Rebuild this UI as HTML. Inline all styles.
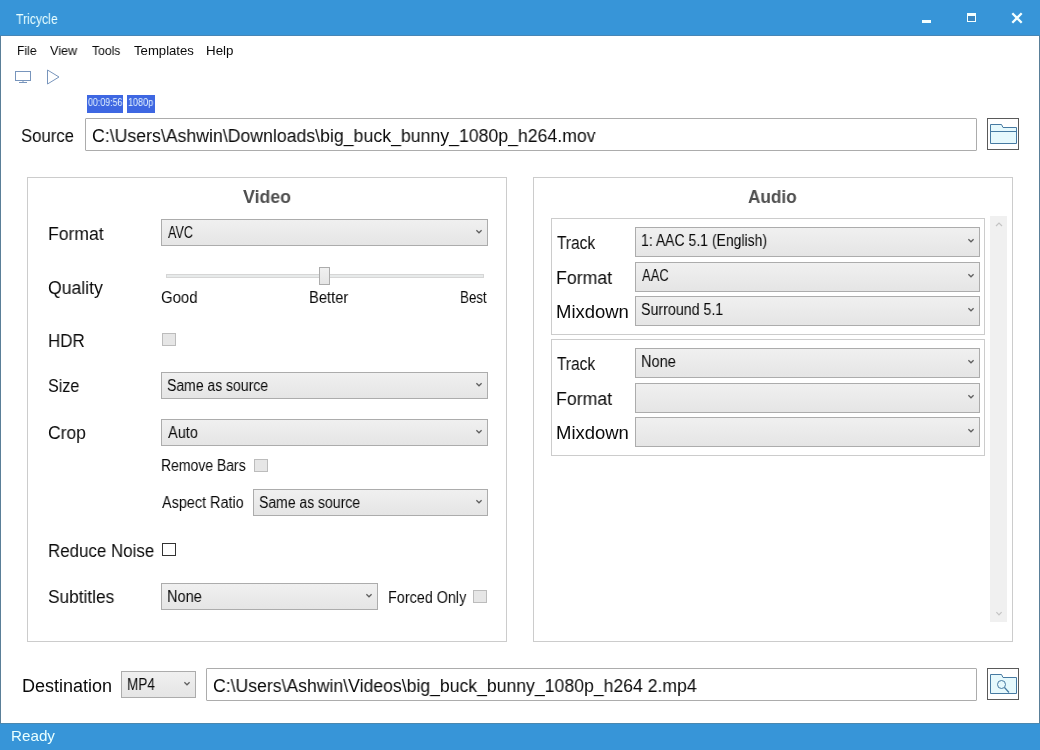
<!DOCTYPE html>
<html><head><meta charset="utf-8">
<style>
*{margin:0;padding:0;box-sizing:border-box}
html,body{width:1040px;height:750px;overflow:hidden;background:#fff}
body{position:relative;font-family:"Liberation Sans",sans-serif;color:#0a0a0a;-webkit-font-smoothing:antialiased}
.a{position:absolute}
.t{position:absolute;white-space:nowrap;line-height:1;transform-origin:0 0;will-change:transform}
.combo{position:absolute;border:1px solid #acacac;background:linear-gradient(#f0f0f0,#e5e5e5)}
.tb{position:absolute;border:1px solid #acacac;background:#fff;border-radius:1px}
.grp{position:absolute;border:1px solid #cccccc}
.cbd{position:absolute;width:14px;height:13px;border:1px solid #bcbcbc;background:#e6e6e6}
</style></head><body>
<div class="a" style="left:0;top:0;width:1040px;height:36px;background:#3795d8"></div>
<div class="t" style="left:16.40px;top:12px;font-size:14px;color:#eaffff;transform:scaleX(0.8752)">Tricycle</div>
<div class="a" style="left:922px;top:20px;width:9px;height:3px;background:#f4ffff"></div>
<div class="a" style="left:967px;top:13px;width:9px;height:9px;border:1px solid #f4ffff;border-top-width:3px;background:#3a86c0"></div>
<svg class="a" style="left:1011px;top:12px" width="12" height="12" viewBox="0 0 12 12"><path d="M1.3 1.3 L10.7 10.7 M10.7 1.3 L1.3 10.7" stroke="#f4ffff" stroke-width="2.3"/></svg>
<div class="a" style="left:0;top:35px;width:1040px;height:1px;background:#4786b6"></div>
<div class="a" style="left:0;top:36px;width:1px;height:687px;background:#5a7f98"></div>
<div class="a" style="left:1039px;top:36px;width:1px;height:687px;background:#5a7f98"></div>
<div class="a" style="left:0;top:723px;width:1040px;height:27px;background:#3795d8"></div>
<div class="a" style="left:0;top:723px;width:1040px;height:1px;background:#4a88b0"></div>
<div class="t" style="left:10.99px;top:728px;font-size:15px;color:#eaffff;transform:scaleX(1.0138)">Ready</div>
<div class="t" style="left:16.62px;top:44px;font-size:13px;transform:scaleX(0.9367)">File</div>
<div class="t" style="left:50.32px;top:44px;font-size:13px;transform:scaleX(0.9735)">View</div>
<div class="t" style="left:91.50px;top:44px;font-size:13px;transform:scaleX(0.9350)">Tools</div>
<div class="t" style="left:133.51px;top:44px;font-size:13px;transform:scaleX(1.0108)">Templates</div>
<div class="t" style="left:206.12px;top:44px;font-size:13px;transform:scaleX(1.0266)">Help</div>
<svg class="a" style="left:0;top:60px" width="70" height="30" viewBox="0 60 70 30">
 <rect x="15.5" y="71.5" width="15" height="9" fill="none" stroke="#7895bc" stroke-width="1"/>
 <line x1="19" y1="82.5" x2="27" y2="82.5" stroke="#7895bc" stroke-width="1"/>
 <line x1="23" y1="81" x2="23" y2="82" stroke="#7895bc" stroke-width="1"/>
 <path d="M47.5 70 L59 77 L47.5 84 Z" fill="none" stroke="#7895bc" stroke-width="1" stroke-linejoin="miter"/>
</svg>
<div class="a" style="left:87px;top:95px;width:36px;height:18px;background:#3e67e2"></div>
<div class="t" style="left:88.40px;top:98px;font-size:10px;color:#e6f4ff;transform:scaleX(0.8833)">00:09:56</div>
<div class="a" style="left:127px;top:95px;width:28px;height:18px;background:#3e67e2"></div>
<div class="t" style="left:127.67px;top:98px;font-size:10px;color:#e6f4ff;transform:scaleX(0.9044)">1080p</div>
<div class="t" style="left:21.02px;top:127px;font-size:18px;transform:scaleX(0.9290)">Source</div>
<div class="tb" style="left:85px;top:118px;width:892px;height:33px"></div>
<div class="t" style="left:91.50px;top:127px;font-size:18px;transform:scaleX(0.9831)">C:\Users\Ashwin\Downloads\big_buck_bunny_1080p_h264.mov</div>
<svg class="a" style="left:987px;top:118px" width="32" height="32" viewBox="0 0 32 32">
<rect x="0.5" y="0.5" width="31" height="31" fill="none" stroke="#5a5a5a" stroke-width="1"/>
<path d="M3.5 6.5 H14.5 L16 9.5 H29.5 V25.5 H3.5 Z" fill="#e6f9fd" stroke="#467aa2" stroke-width="1"/>
<line x1="3.5" y1="13.5" x2="29.5" y2="13.5" stroke="#467aa2" stroke-width="1"/>
</svg>
<div class="grp" style="left:27px;top:177px;width:480px;height:465px"></div>
<div class="t" style="left:243.39px;top:188px;font-size:18px;font-weight:bold;color:#4f4f4f;transform:scaleX(0.9840)">Video</div>
<div class="t" style="left:47.83px;top:225px;font-size:18px;transform:scaleX(0.9758)">Format</div>
<div class="combo" style="left:161px;top:219px;width:327px;height:27px"></div>
<svg class="a" style="left:475px;top:229px" width="8" height="5" viewBox="0 0 8 5"><path d="M1.4 1.2 L4 3.8 L6.6 1.2" fill="none" stroke="#606060" stroke-width="1.25"/></svg>
<div class="t" style="left:167.55px;top:225px;font-size:16px;transform:scaleX(0.7841)">AVC</div>
<div class="t" style="left:48.25px;top:279px;font-size:18px;transform:scaleX(0.9788)">Quality</div>
<div class="a" style="left:166px;top:274px;width:318px;height:4px;background:#e7eaea;border:1px solid #d6d6d6"></div>
<div class="a" style="left:319px;top:267px;width:11px;height:18px;background:linear-gradient(#f0f0f0,#e5e5e5);border:1px solid #acacac"></div>
<div class="t" style="left:161.25px;top:290px;font-size:16px;transform:scaleX(0.9341)">Good</div>
<div class="t" style="left:308.92px;top:290px;font-size:16px;transform:scaleX(0.9199)">Better</div>
<div class="t" style="left:459.78px;top:290px;font-size:16px;transform:scaleX(0.8324)">Best</div>
<div class="t" style="left:47.88px;top:332px;font-size:18px;transform:scaleX(0.9404)">HDR</div>
<div class="cbd" style="left:162px;top:333px"></div>
<div class="t" style="left:48.12px;top:377px;font-size:18px;transform:scaleX(0.8943)">Size</div>
<div class="combo" style="left:161px;top:372px;width:327px;height:27px"></div>
<svg class="a" style="left:475px;top:382px" width="8" height="5" viewBox="0 0 8 5"><path d="M1.4 1.2 L4 3.8 L6.6 1.2" fill="none" stroke="#606060" stroke-width="1.25"/></svg>
<div class="t" style="left:166.70px;top:378px;font-size:16px;transform:scaleX(0.8739)">Same as source</div>
<div class="t" style="left:48.20px;top:424px;font-size:18px;transform:scaleX(0.9709)">Crop</div>
<div class="combo" style="left:161px;top:419px;width:327px;height:27px"></div>
<svg class="a" style="left:475px;top:429px" width="8" height="5" viewBox="0 0 8 5"><path d="M1.4 1.2 L4 3.8 L6.6 1.2" fill="none" stroke="#606060" stroke-width="1.25"/></svg>
<div class="t" style="left:167.55px;top:425px;font-size:16px;transform:scaleX(0.9102)">Auto</div>
<div class="t" style="left:161.07px;top:458px;font-size:16px;transform:scaleX(0.8730)">Remove Bars</div>
<div class="cbd" style="left:254px;top:459px"></div>
<div class="t" style="left:162.04px;top:495px;font-size:16px;transform:scaleX(0.9012)">Aspect Ratio</div>
<div class="combo" style="left:253px;top:489px;width:235px;height:27px"></div>
<svg class="a" style="left:475px;top:499px" width="8" height="5" viewBox="0 0 8 5"><path d="M1.4 1.2 L4 3.8 L6.6 1.2" fill="none" stroke="#606060" stroke-width="1.25"/></svg>
<div class="t" style="left:258.71px;top:495px;font-size:16px;transform:scaleX(0.8738)">Same as source</div>
<div class="t" style="left:47.86px;top:542px;font-size:18px;transform:scaleX(0.9399)">Reduce Noise</div>
<div class="a" style="left:162px;top:543px;width:14px;height:13px;border:1px solid #333;background:#fff"></div>
<div class="t" style="left:48.13px;top:588px;font-size:18px;transform:scaleX(0.9600)">Subtitles</div>
<div class="combo" style="left:161px;top:583px;width:217px;height:27px"></div>
<svg class="a" style="left:365px;top:593px" width="8" height="5" viewBox="0 0 8 5"><path d="M1.4 1.2 L4 3.8 L6.6 1.2" fill="none" stroke="#606060" stroke-width="1.25"/></svg>
<div class="t" style="left:166.52px;top:589px;font-size:16px;transform:scaleX(0.9115)">None</div>
<div class="t" style="left:388.02px;top:590px;font-size:16px;transform:scaleX(0.8984)">Forced Only</div>
<div class="cbd" style="left:473px;top:590px"></div>
<div class="grp" style="left:533px;top:177px;width:480px;height:465px"></div>
<div class="t" style="left:748.43px;top:188px;font-size:18px;font-weight:bold;color:#4f4f4f;transform:scaleX(0.9542)">Audio</div>
<div class="a" style="left:990px;top:216px;width:17px;height:406px;background:#f0f0f0"></div>
<svg class="a" style="left:995px;top:222px" width="8" height="5" viewBox="0 0 8 5"><path d="M1 4 L4 1 L7 4" fill="none" stroke="#c4c4c4" stroke-width="1.2"/></svg>
<svg class="a" style="left:995px;top:611px" width="8" height="5" viewBox="0 0 8 5"><path d="M1.4 1.2 L4 3.8 L6.6 1.2" fill="none" stroke="#c4c4c4" stroke-width="1.2"/></svg>
<div class="grp" style="left:551px;top:218px;width:434px;height:117px"></div>
<div class="t" style="left:556.84px;top:234px;font-size:18px;transform:scaleX(0.8621)">Track</div>
<div class="combo" style="left:635px;top:227px;width:345px;height:30px"></div>
<svg class="a" style="left:967px;top:238px" width="8" height="5" viewBox="0 0 8 5"><path d="M1.4 1.2 L4 3.8 L6.6 1.2" fill="none" stroke="#606060" stroke-width="1.25"/></svg>
<div class="t" style="left:640.61px;top:233px;font-size:16px;transform:scaleX(0.8754)">1: AAC 5.1 (English)</div>
<div class="t" style="left:556.32px;top:269px;font-size:18px;transform:scaleX(0.9845)">Format</div>
<div class="combo" style="left:635px;top:262px;width:345px;height:30px"></div>
<svg class="a" style="left:967px;top:273px" width="8" height="5" viewBox="0 0 8 5"><path d="M1.4 1.2 L4 3.8 L6.6 1.2" fill="none" stroke="#606060" stroke-width="1.25"/></svg>
<div class="t" style="left:641.55px;top:268px;font-size:16px;transform:scaleX(0.8156)">AAC</div>
<div class="t" style="left:556.31px;top:303px;font-size:18px;transform:scaleX(1.0263)">Mixdown</div>
<div class="combo" style="left:635px;top:296px;width:345px;height:30px"></div>
<svg class="a" style="left:967px;top:307px" width="8" height="5" viewBox="0 0 8 5"><path d="M1.4 1.2 L4 3.8 L6.6 1.2" fill="none" stroke="#606060" stroke-width="1.25"/></svg>
<div class="t" style="left:640.71px;top:302px;font-size:16px;transform:scaleX(0.8883)">Surround 5.1</div>
<div class="grp" style="left:551px;top:339px;width:434px;height:117px"></div>
<div class="t" style="left:556.84px;top:355px;font-size:18px;transform:scaleX(0.8621)">Track</div>
<div class="combo" style="left:635px;top:348px;width:345px;height:30px"></div>
<svg class="a" style="left:967px;top:359px" width="8" height="5" viewBox="0 0 8 5"><path d="M1.4 1.2 L4 3.8 L6.6 1.2" fill="none" stroke="#606060" stroke-width="1.25"/></svg>
<div class="t" style="left:640.52px;top:354px;font-size:16px;transform:scaleX(0.9116)">None</div>
<div class="t" style="left:556.32px;top:390px;font-size:18px;transform:scaleX(0.9845)">Format</div>
<div class="combo" style="left:635px;top:383px;width:345px;height:30px"></div>
<svg class="a" style="left:967px;top:394px" width="8" height="5" viewBox="0 0 8 5"><path d="M1.4 1.2 L4 3.8 L6.6 1.2" fill="none" stroke="#606060" stroke-width="1.25"/></svg>
<div class="t" style="left:556.31px;top:424px;font-size:18px;transform:scaleX(1.0263)">Mixdown</div>
<div class="combo" style="left:635px;top:417px;width:345px;height:30px"></div>
<svg class="a" style="left:967px;top:428px" width="8" height="5" viewBox="0 0 8 5"><path d="M1.4 1.2 L4 3.8 L6.6 1.2" fill="none" stroke="#606060" stroke-width="1.25"/></svg>
<div class="t" style="left:21.92px;top:677px;font-size:18px">Destination</div>
<div class="combo" style="left:121px;top:671px;width:75px;height:27px"></div>
<svg class="a" style="left:183px;top:681px" width="8" height="5" viewBox="0 0 8 5"><path d="M1.4 1.2 L4 3.8 L6.6 1.2" fill="none" stroke="#606060" stroke-width="1.25"/></svg>
<div class="t" style="left:126.57px;top:677px;font-size:16px;transform:scaleX(0.8492)">MP4</div>
<div class="tb" style="left:206px;top:668px;width:771px;height:33px"></div>
<div class="t" style="left:212.50px;top:677px;font-size:18px;transform:scaleX(0.9790)">C:\Users\Ashwin\Videos\big_buck_bunny_1080p_h264 2.mp4</div>
<svg class="a" style="left:987px;top:668px" width="32" height="32" viewBox="0 0 32 32">
<rect x="0.5" y="0.5" width="31" height="31" fill="none" stroke="#5a5a5a" stroke-width="1"/>
<path d="M3.5 6.5 H14.5 L16 9.5 H29.5 V25.5 H3.5 Z" fill="#e6f9fd" stroke="#467aa2" stroke-width="1"/>
<circle cx="14.5" cy="16.5" r="4" fill="none" stroke="#467aa2" stroke-width="1"/><line x1="17.5" y1="19.5" x2="22" y2="24.5" stroke="#467aa2" stroke-width="1.2"/>
</svg>
</body></html>
